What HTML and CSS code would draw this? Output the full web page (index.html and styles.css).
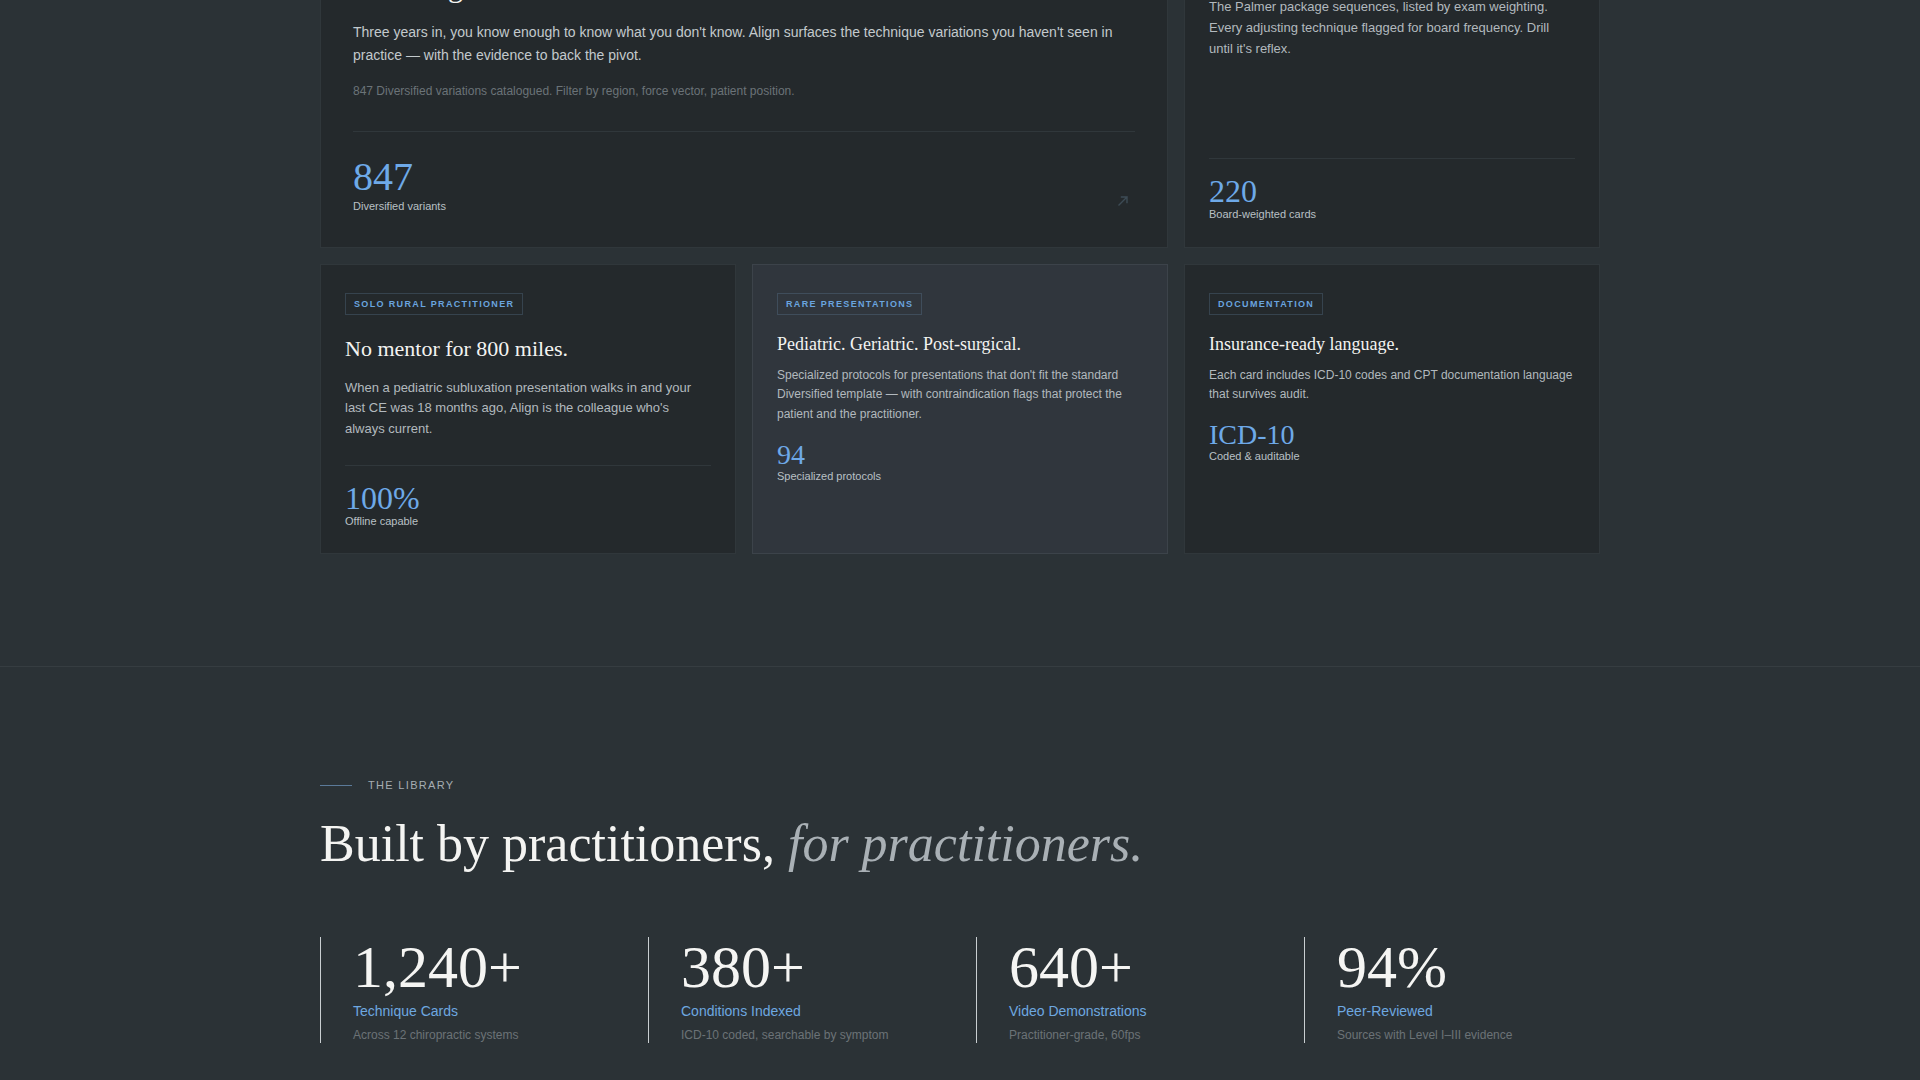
FILE: index.html
```html
<!DOCTYPE html>
<html lang="en">
<head>
<meta charset="utf-8">
<title>Align — Technique library for chiropractors</title>
<link rel="stylesheet" href="styles.css">
</head>
<body>
<main class="page">
  <section class="features">
    <div class="container feature-grid">
      <article class="card card-lg">
        <span class="tag">Early-career associate</span>
        <h3 class="card-title">Thinking further.</h3>
        <p class="card-body">Three years in, you know enough to know what you don't know. Align surfaces the technique variations you haven't seen in practice — with the evidence to back the pivot.</p>
        <p class="card-note">847 Diversified variations catalogued. Filter by region, force vector, patient position.</p>
        <div class="card-stat">
          <div class="stat-block">
            <div class="stat-num">847</div>
            <div class="stat-label">Diversified variants</div>
          </div>
          <svg class="stat-arrow" width="14" height="14" viewBox="0 0 14 14" fill="none" stroke="currentColor" stroke-width="1.4" stroke-linecap="square" aria-hidden="true"><path d="M3 11 L11 3 M5.5 3 H11 V8.5"/></svg>
        </div>
      </article>

      <article class="card card-md card-board">
        <span class="tag">Board candidate</span>
        <h3 class="card-title">Pass Part IV.</h3>
        <p class="card-body">The Palmer package sequences, listed by exam weighting. Every adjusting technique flagged for board frequency. Drill until it's reflex.</p>
        <div class="card-stat">
          <div class="stat-block">
            <div class="stat-num">220</div>
            <div class="stat-label">Board-weighted cards</div>
          </div>
        </div>
      </article>

      <article class="card card-md">
        <span class="tag">Solo rural practitioner</span>
        <h3 class="card-title">No mentor for 800 miles.</h3>
        <p class="card-body">When a pediatric subluxation presentation walks in and your last CE was 18 months ago, Align is the colleague who's always current.</p>
        <div class="card-stat">
          <div class="stat-block">
            <div class="stat-num">100%</div>
            <div class="stat-label">Offline capable</div>
          </div>
        </div>
      </article>

      <article class="card card-sm card-hl">
        <span class="tag">Rare presentations</span>
        <h3 class="card-title">Pediatric. Geriatric. Post-surgical.</h3>
        <p class="card-body">Specialized protocols for presentations that don't fit the standard Diversified template — with contraindication flags that protect the patient and the practitioner.</p>
        <div class="card-stat">
          <div class="stat-block">
            <div class="stat-num">94</div>
            <div class="stat-label">Specialized protocols</div>
          </div>
        </div>
      </article>

      <article class="card card-sm">
        <span class="tag">Documentation</span>
        <h3 class="card-title">Insurance-ready language.</h3>
        <p class="card-body">Each card includes ICD-10 codes and CPT documentation language that survives audit.</p>
        <div class="card-stat">
          <div class="stat-block">
            <div class="stat-num">ICD-10</div>
            <div class="stat-label">Coded &amp; auditable</div>
          </div>
        </div>
      </article>
    </div>
  </section>

  <section class="library">
    <div class="container">
      <div class="eyebrow">The Library</div>
      <h2 class="library-title">Built by practitioners, <em>for practitioners.</em></h2>
      <div class="stats">
        <div class="stat">
          <div class="stat-big">1,240+</div>
          <div class="stat-name">Technique Cards</div>
          <div class="stat-desc">Across 12 chiropractic systems</div>
        </div>
        <div class="stat">
          <div class="stat-big">380+</div>
          <div class="stat-name">Conditions Indexed</div>
          <div class="stat-desc">ICD-10 coded, searchable by symptom</div>
        </div>
        <div class="stat">
          <div class="stat-big">640+</div>
          <div class="stat-name">Video Demonstrations</div>
          <div class="stat-desc">Practitioner-grade, 60fps</div>
        </div>
        <div class="stat">
          <div class="stat-big">94%</div>
          <div class="stat-name">Peer-Reviewed</div>
          <div class="stat-desc">Sources with Level I–III evidence</div>
        </div>
      </div>
    </div>
  </section>
</main>
</body>
</html>
```

FILE: styles.css
```css
* { box-sizing: border-box; }

html, body {
  margin: 0;
  padding: 0;
}

body {
  background: #2b3236;
  color: #b4bbc0;
  font-family: "Liberation Sans", Arial, sans-serif;
  overflow-x: hidden;
}

.container {
  width: 1280px;
  margin: 0 auto;
}

/* ---------- Feature cards ---------- */

.features {
  margin-top: -114.5px;
  padding-bottom: 112px;
}

.feature-grid {
  display: grid;
  grid-template-columns: repeat(3, 1fr);
  gap: 16px;
}

.card {
  display: flex;
  flex-direction: column;
  align-items: flex-start;
  background: #24292c;
  border: 1px solid #30373b;
  padding: 28px 24px 24px;
}

.card-lg {
  grid-column: span 2;
  padding: 32px 32px 33px;
}

.card-hl {
  background: #30363d;
  border-color: #3c434a;
}

.tag {
  display: inline-block;
  font-size: 9px;
  line-height: 12px;
  font-weight: 700;
  letter-spacing: 0.15em;
  text-transform: uppercase;
  color: #6aa4df;
  border: 1px solid rgba(120, 160, 200, 0.22);
  padding: 4px 8px;
  margin-bottom: 20px;
}

.card-title {
  margin: 0;
  font-family: "Liberation Serif", "Times New Roman", serif;
  font-weight: 400;
  color: #f3f3f1;
}

.card-body {
  margin: 0;
  color: #b2b9be;
}

.card-lg .tag { margin-bottom: 28px; }
.card-lg .card-title { font-size: 30px; line-height: 1.2; margin-bottom: 16px; }
.card-lg .card-body { font-size: 14px; line-height: 1.65; color: #c3c9cd; }

.card-md .card-title { font-size: 22px; line-height: 1.25; margin-bottom: 15px; }
.card-md .card-body { font-size: 13px; line-height: 1.6; margin-bottom: 25px; }

.card-board { padding-bottom: 25px; }
.card-board .tag { margin-bottom: 18px; }

.card-sm .tag { margin-bottom: 18px; }
.card-sm .card-title { font-size: 18px; line-height: 1.25; margin-bottom: 10px; }
.card-sm .card-body { font-size: 12px; line-height: 1.65; }

.card-note {
  margin: 15px 0 31px;
  font-size: 12px;
  line-height: 1.5;
  color: #6b7378;
}

.card-stat {
  align-self: stretch;
  display: flex;
  justify-content: space-between;
  align-items: flex-end;
}

.card-lg .card-stat {
  margin-top: auto;
  border-top: 1px solid #30373b;
  padding-top: 25px;
}

.card-md .card-stat {
  margin-top: auto;
  border-top: 1px solid #30373b;
  padding-top: 16px;
}

.card-sm .card-stat {
  margin-top: 16px;
}

.stat-num {
  font-family: "Liberation Serif", "Times New Roman", serif;
  line-height: 1;
  color: #6ea9e8;
}

.card-lg .stat-num { font-size: 40px; }
.card-md .stat-num { font-size: 32px; }
.card-sm .stat-num { font-size: 28px; }

.stat-label {
  font-size: 11px;
  line-height: 1.4;
  color: #b9c0c5;
}

.card-lg .stat-label { margin-top: 2px; }

.stat-arrow {
  color: #3d4b55;
  margin: 0 5px 6px 0;
}

/* ---------- Library ---------- */

.library {
  border-top: 1px solid #363d41;
  padding: 110px 0 120px;
}

.eyebrow {
  display: flex;
  align-items: center;
  gap: 16px;
  margin-bottom: 22px;
  font-size: 11px;
  line-height: 16px;
  letter-spacing: 0.12em;
  text-transform: uppercase;
  color: #a6adb2;
}

.eyebrow::before {
  content: "";
  width: 32px;
  height: 1px;
  background: #5b7a99;
}

.library-title {
  margin: 0 0 64px;
  font-family: "Liberation Serif", "Times New Roman", serif;
  font-weight: 400;
  font-size: 52px;
  line-height: 1.1;
  color: #f4f4f2;
}

.library-title em {
  color: #a9b0b5;
}

.stats {
  display: grid;
  grid-template-columns: repeat(4, 1fr);
  gap: 32px;
}

.stat {
  border-left: 1px solid #c9ced1;
  padding-left: 32px;
}

.stat-big {
  font-family: "Liberation Serif", "Times New Roman", serif;
  font-size: 60px;
  line-height: 1;
  color: #f5f5f3;
}

.stat-name {
  margin-top: 4px;
  font-size: 14px;
  line-height: 20px;
  color: #6ea8e0;
}

.stat-desc {
  margin-top: 6px;
  font-size: 12px;
  line-height: 16px;
  color: #6b7277;
}
```
